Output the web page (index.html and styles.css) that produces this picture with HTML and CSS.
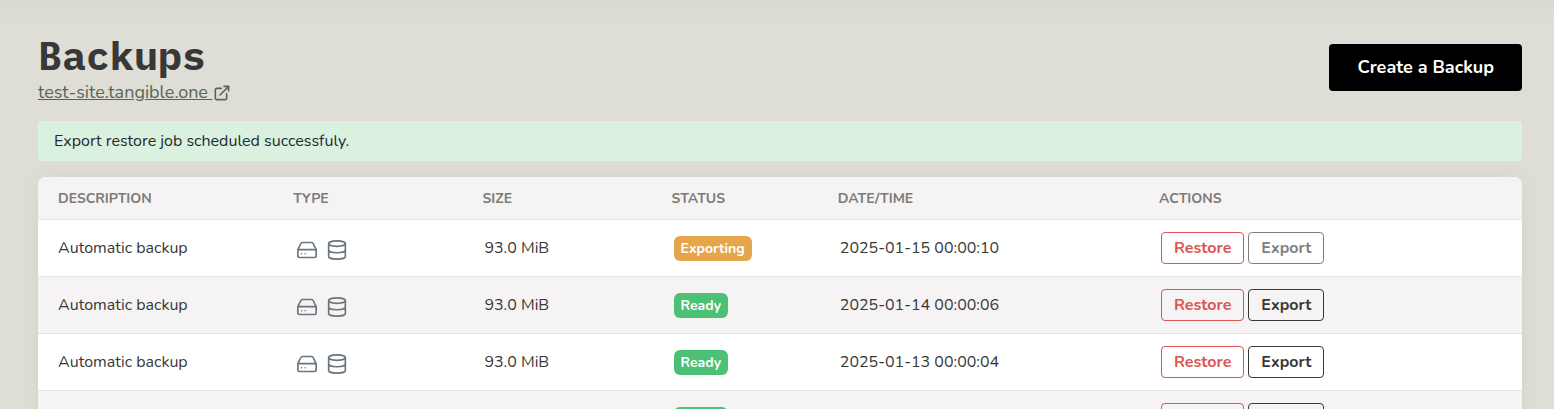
FILE: index.html
```html
<!DOCTYPE html>
<html lang="en">
<head>
    <meta charset="UTF-8">
    <meta name="viewport" content="width=device-width, initial-scale=1.0">
    <title>Backups</title>
    <link rel="stylesheet" href="styles.css">
</head>
<body>
    <!-- Shared icons -->
    <svg class="icon-defs" aria-hidden="true">
        <symbol id="icon-drive" viewBox="0 0 24 24">
            <path d="M1 11.500h22M6.500 3h11c.9 0 1.600.5 1.900 1.200L23 11.500V19a2 2 0 0 1-2 2H3a2 2 0 0 1-2-2v-7.500l3.600-7.300C4.900 3.500 5.600 3 6.500 3z"/>
            <path stroke-width="1.800" d="M5.500 16.500h.01M9.800 16.500h.01"/>
        </symbol>
        <symbol id="icon-database" viewBox="0 0 24 24">
            <ellipse cx="12" cy="4.300" rx="10" ry="3.300"/>
            <path d="M2 4.300v15.400c0 1.800 4.500 3.300 10 3.300s10-1.500 10-3.300V4.300M2 12c0 1.800 4.500 3.300 10 3.300s10-1.500 10-3.300"/>
        </symbol>
    </svg>

    <main class="page">
        <header class="page-header">
            <div>
                <h1>Backups</h1>
                <a class="site-link" href="#">test-site.tangible.one&nbsp;<svg class="link-icon" viewBox="0 0 24 24" aria-hidden="true"><path d="M11 5H4a2 2 0 0 0-2 2v13a2 2 0 0 0 2 2h13a2 2 0 0 0 2-2v-7M9 15 22 2M15 2h7v7"/></svg></a>
            </div>
            <button type="button" class="create-btn">Create a Backup</button>
        </header>

        <div class="alert" role="status">Export restore job scheduled successfuly.</div>

        <div class="table-card">
            <table>
                <thead>
                    <tr>
                        <th class="col-description">Description</th>
                        <th class="col-type">Type</th>
                        <th class="col-size">Size</th>
                        <th class="col-status">Status</th>
                        <th class="col-date">Date/Time</th>
                        <th>Actions</th>
                    </tr>
                </thead>
                <tbody>
                    <tr>
                        <td>Automatic backup</td>
                        <td>
                            <div class="types">
                                <svg class="icon"><use href="#icon-drive"/></svg>
                                <svg class="icon"><use href="#icon-database"/></svg>
                            </div>
                        </td>
                        <td>93.0 MiB</td>
                        <td><span class="badge exporting">Exporting</span></td>
                        <td>2025-01-15 00:00:10</td>
                        <td>
                            <div class="actions">
                                <button type="button" class="btn restore">Restore</button>
                                <button type="button" class="btn export" disabled>Export</button>
                            </div>
                        </td>
                    </tr>
                    <tr>
                        <td>Automatic backup</td>
                        <td>
                            <div class="types">
                                <svg class="icon"><use href="#icon-drive"/></svg>
                                <svg class="icon"><use href="#icon-database"/></svg>
                            </div>
                        </td>
                        <td>93.0 MiB</td>
                        <td><span class="badge">Ready</span></td>
                        <td>2025-01-14 00:00:06</td>
                        <td>
                            <div class="actions">
                                <button type="button" class="btn restore">Restore</button>
                                <button type="button" class="btn export">Export</button>
                            </div>
                        </td>
                    </tr>
                    <tr>
                        <td>Automatic backup</td>
                        <td>
                            <div class="types">
                                <svg class="icon"><use href="#icon-drive"/></svg>
                                <svg class="icon"><use href="#icon-database"/></svg>
                            </div>
                        </td>
                        <td>93.0 MiB</td>
                        <td><span class="badge">Ready</span></td>
                        <td>2025-01-13 00:00:04</td>
                        <td>
                            <div class="actions">
                                <button type="button" class="btn restore">Restore</button>
                                <button type="button" class="btn export">Export</button>
                            </div>
                        </td>
                    </tr>
                    <tr>
                        <td>Automatic backup</td>
                        <td>
                            <div class="types">
                                <svg class="icon"><use href="#icon-drive"/></svg>
                                <svg class="icon"><use href="#icon-database"/></svg>
                            </div>
                        </td>
                        <td>93.0 MiB</td>
                        <td><span class="badge">Ready</span></td>
                        <td>2025-01-12 00:00:05</td>
                        <td>
                            <div class="actions">
                                <button type="button" class="btn restore">Restore</button>
                                <button type="button" class="btn export">Export</button>
                            </div>
                        </td>
                    </tr>
                </tbody>
            </table>
        </div>
    </main>
</body>
</html>
```
FILE: styles.css
```css
* {
    box-sizing: border-box;
}

html {
    scrollbar-width: none;
}

body {
    margin: 0;
    font-family: Nunito, "Open Sans", sans-serif;
    font-size: 16px;
    line-height: 24px;
    color: #383836;
    background: linear-gradient(#d9dad1, #deded6 24px) no-repeat #deded6;
}

button {
    font-family: inherit;
    font-weight: bold;
    cursor: pointer;
}

.icon-defs {
    display: none;
}

.page {
    padding: 30px 32px 32px 38px;
}

.page-header {
    display: flex;
    justify-content: space-between;
    align-items: center;
    margin-bottom: 16px;
}

h1 {
    margin: 0;
    font-family: "IBM Plex Mono", "DejaVu Sans Mono", monospace;
    font-size: 40px;
    line-height: 50px;
    font-weight: bold;
}

.site-link {
    display: block;
    font-size: 18px;
    line-height: 25px;
    color: #596653;
}

.link-icon {
    width: 16px;
    height: 16px;
    margin-left: 1px;
    vertical-align: -3px;
    fill: none;
    stroke: currentColor;
    stroke-width: 2.4;
    stroke-linecap: round;
    stroke-linejoin: round;
}

.create-btn {
    padding: 11px 28px;
    font-size: 18px;
    line-height: 25px;
    color: white;
    background-color: black;
    border: none;
    border-radius: 4px;
}

.alert {
    padding: 8px 16px;
    margin-bottom: 16px;
    color: #1f2a2e;
    background-color: #daf1e0;
    border-radius: 4px;
}

.table-card {
    background-color: white;
    border-radius: 8px;
    box-shadow: 0 0 24px rgba(60, 60, 30, 0.06);
    overflow: hidden;
}

table {
    width: 100%;
    table-layout: fixed;
    border-collapse: separate;
    border-spacing: 0;
}

th {
    padding: 10px 20px 8px;
    font-size: 14px;
    text-align: left;
    text-transform: uppercase;
    color: #7b7b74;
    background-color: #f5f3f4;
    border-bottom: 1px solid #e5e4e4;
}

td {
    height: 57px;
    padding: 0 22px;
    border-bottom: 1px solid #e5e4e4;
}

td:first-child {
    padding-left: 20px;
}

tbody tr:nth-child(even) {
    background-color: #f5f3f4;
}

.col-description {
    width: 15.85%;
}

.col-type,
.col-size {
    width: 12.75%;
}

.col-status {
    width: 11.2%;
}

.col-date {
    width: 21.65%;
}

.types {
    display: flex;
    gap: 10px;
    padding: 4px 2px 0;
}

.icon {
    width: 20px;
    height: 20px;
    fill: none;
    stroke: #6b757d;
    stroke-width: 2;
    stroke-linecap: round;
    stroke-linejoin: round;
}

.badge {
    display: inline-block;
    padding: 0 7px;
    font-size: 14px;
    line-height: 25px;
    font-weight: bold;
    color: white;
    background-color: #4cc075;
    border-radius: 6px;
    vertical-align: middle;
}

.badge.exporting {
    background-color: #e5a64b;
}

.actions {
    display: flex;
    gap: 4px;
}

.btn {
    padding: 3px 12px;
    font-size: 16px;
    line-height: 24px;
    color: #383836;
    background: transparent;
    border: 1px solid currentColor;
    border-radius: 4px;
}

.btn.restore {
    color: #dc5550;
}

.btn:disabled {
    color: #808080;
    cursor: default;
}
```
